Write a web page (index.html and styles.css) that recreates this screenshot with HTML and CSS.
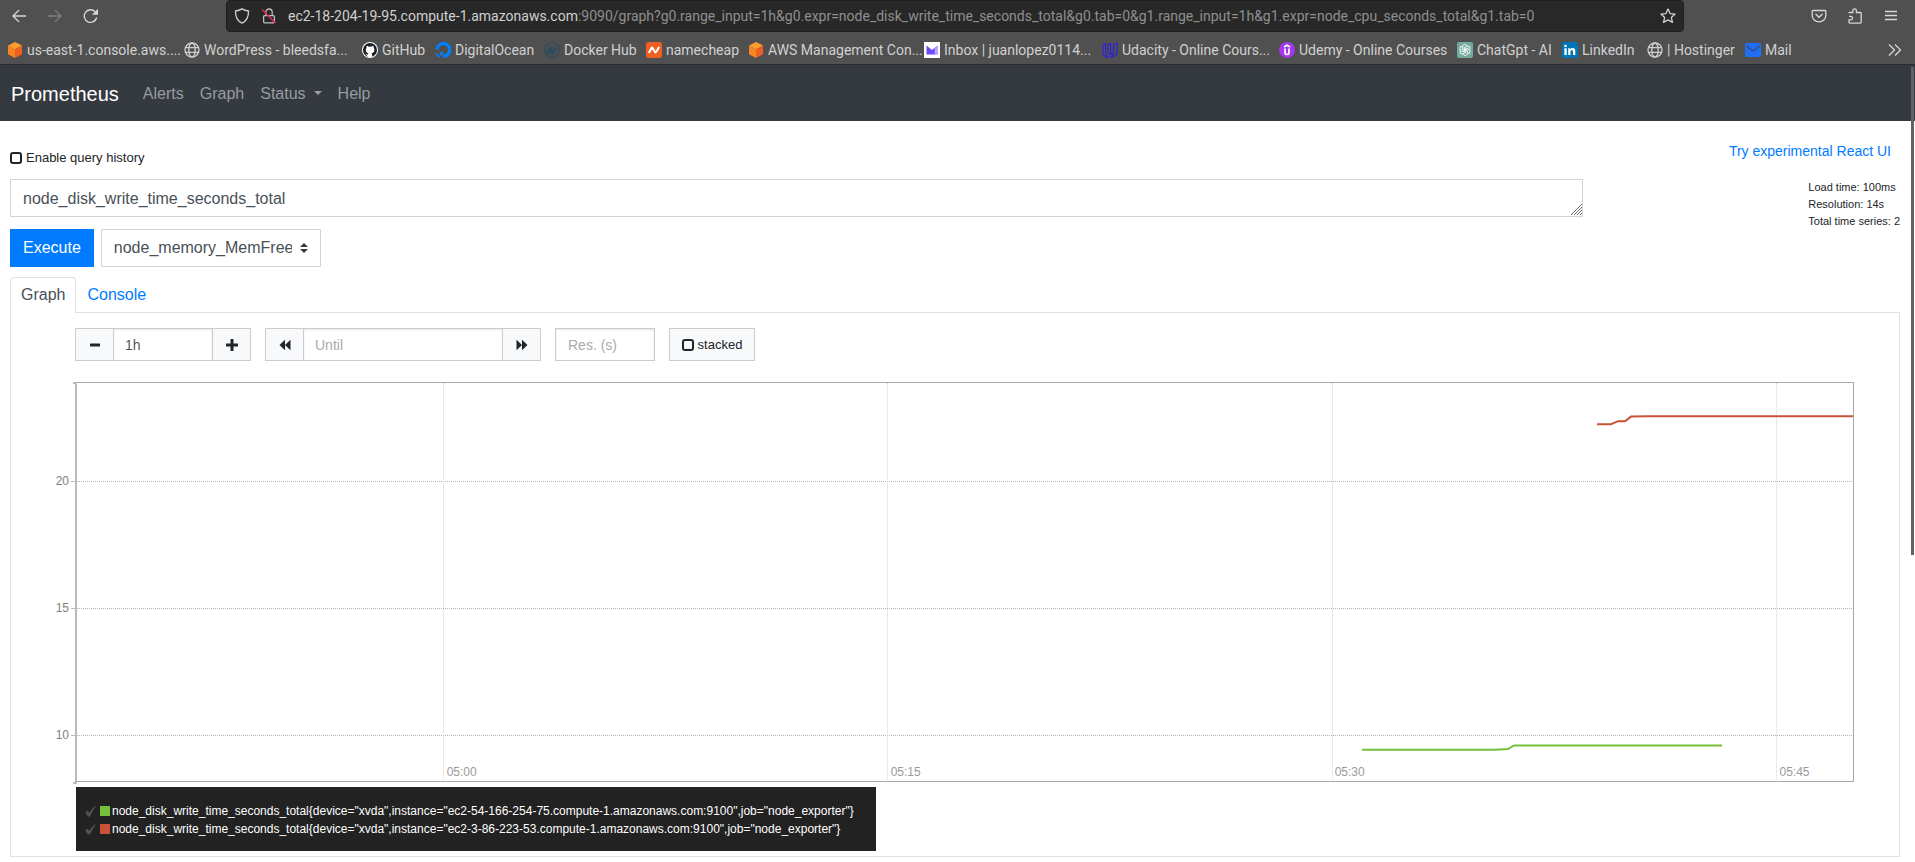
FILE: index.html
```html
<!DOCTYPE html>
<html lang="en">
<head>
<meta charset="utf-8">
<title>Prometheus Time Series Collection and Processing Server</title>
<link rel="stylesheet" href="styles.css">
</head>
<body>
<svg class="defs" aria-hidden="true">
  <symbol id="globe" viewBox="0 0 16 16"><g fill="none" stroke="#cfcfcf" stroke-width="1.3"><circle cx="8" cy="8" r="7"/><ellipse cx="8" cy="8" rx="3.2" ry="7"/><path d="M1.5 5.7h13M1.5 10.3h13"/></g></symbol>
  <symbol id="cube" viewBox="0 0 16 16"><path d="M8 0l7 3.6-7 3.8-7-3.8z" fill="#fb9d2c"/><path d="M1 3.6l7 3.8V16l-7-3.8z" fill="#f68522"/><path d="M15 3.6L8 7.4V16l7-3.8z" fill="#ef5f22"/></symbol>
  <symbol id="box" viewBox="0 0 12 12"><rect x="1" y="1" width="10" height="10" rx="2" fill="none" stroke="#212529" stroke-width="2"/></symbol>
  <symbol id="check" viewBox="0 0 12 12"><path d="M.3 7.200L2.700 5.600l1.500 2.200Q7 2.800 11.700.3 8 5 4.900 11.600H2.700z" fill="#505050"/></symbol>
</svg>

<header class="browser">
  <div class="toolbar">
    <div class="history">
      <button type="button" aria-label="Back"><svg width="16" height="16" viewBox="0 0 16 16"><path d="M15 8H2M8 2L2 8l6 6" fill="none" stroke="#d6d6d6" stroke-width="1.3"/></svg></button>
      <button type="button" aria-label="Forward"><svg width="16" height="16" viewBox="0 0 16 16"><path d="M1 8h13M8 2l6 6-6 6" fill="none" stroke="#7c7c7c" stroke-width="1.3"/></svg></button>
      <button type="button" aria-label="Reload"><svg width="16" height="16" viewBox="0 0 16 16"><path d="M13.7 9.5A6.3 6.3 0 1 1 12.2 3.800" fill="none" stroke="#d6d6d6" stroke-width="1.4"/><path d="M15 .8v6H9z" fill="#d6d6d6"/></svg></button>
    </div>
    <div class="urlbar">
      <svg width="16" height="16" viewBox="0 0 16 16"><path d="M8 .9c2 1.300 4 1.900 6.500 2.100.2 5.600-1.600 9.800-6.500 12.100C3.100 12.800 1.300 8.600 1.500 3 4 2.800 6 2.200 8 .9z" fill="none" stroke="#d0d0d0" stroke-width="1.3"/></svg>
      <svg width="16" height="16" viewBox="0 0 16 16"><rect x="2.600" y="7.600" width="10.800" height="7.200" rx="1" fill="none" stroke="#bdbdbd" stroke-width="1.3"/><path d="M4.800 7.500V4.200a3.200 3.200 0 0 1 6.400 0v3.300" fill="none" stroke="#bdbdbd" stroke-width="1.3"/><path d="M1 1.500l13.500 13.500" stroke="#e22850" stroke-width="1.500"/></svg>
      <div class="url" role="textbox" aria-label="Address"><b>ec2-18-204-19-95.compute-1.amazonaws.com</b>:9090/graph?g0.range_input=1h&amp;g0.expr=node_disk_write_time_seconds_total&amp;g0.tab=0&amp;g1.range_input=1h&amp;g1.expr=node_cpu_seconds_total&amp;g1.tab=0</div>
      <button type="button" aria-label="Bookmark"><svg width="16" height="16" viewBox="0 0 16 16"><path d="M8 1l2.100 4.600 5 .5-3.800 3.300 1.200 5L8 11.900l-4.500 2.500 1.200-5L.9 6.100l5-.5z" fill="none" stroke="#d0d0d0" stroke-width="1.3" stroke-linejoin="round"/></svg></button>
    </div>
    <div class="tools">
      <button type="button" aria-label="Pocket"><svg width="16" height="16" viewBox="0 0 16 16"><path d="M2 2.500h12a.8.8 0 0 1 .8.8v4.200a6.800 6.300 0 0 1-13.600 0V3.300a.8.8 0 0 1 .8-.8z" fill="none" stroke="#d6d6d6" stroke-width="1.3"/><path d="M4.500 6L8 9.300 11.500 6" fill="none" stroke="#d6d6d6" stroke-width="1.400"/></svg></button>
      <button type="button" aria-label="Extensions"><svg width="16" height="16" viewBox="0 0 16 16"><path d="M2 5.300q0-.8.8-.8h3V2.700a1.800 1.800 0 0 1 3.600 0v1.800h4q.8 0 .8.800v9q0 .8-.8.8H2.800q-.8 0-.8-.8v-2.500h1.800a1.700 1.700 0 0 0 0-3.400H2" fill="none" stroke="#d6d6d6" stroke-width="1.3"/></svg></button>
      <button type="button" aria-label="Menu"><svg width="16" height="16" viewBox="0 0 16 16"><path d="M2 3.500h12M2 7.500h12M2 11.500h12" stroke="#d6d6d6" stroke-width="1.3"/></svg></button>
    </div>
  </div>
  <nav class="bookmarks" aria-label="Bookmarks">
    <a href="#"><svg><use href="#cube"/></svg><span>us-east-1.console.aws....</span></a>
    <a href="#"><svg><use href="#globe"/></svg><span>WordPress - bleedsfa...</span></a>
    <a href="#"><svg viewBox="0 0 16 16"><circle cx="8" cy="8" r="8" fill="#fff"/><circle cx="8" cy="8" r="7" fill="#1b1f23"/><path d="M5.900 14.700v-2.300C4.300 12.600 4 11.500 3.300 11.200M3.800 8c0-1 .3-1.700.8-2.200-.2-.7-.1-1.400.1-2 .8 0 1.500.5 2 .9a7 7 0 0 1 2.800 0c.5-.4 1.200-.9 2-.9.2.6.3 1.300.1 2 .5.5.8 1.200.8 2.200 0 2.200-1.400 3-2.900 3.200.4.400.6.900.6 1.600v2.200H5.900v-2.600c0-.5.2-.9.5-1.200C5 11 3.800 10.200 3.800 8z" fill="#fff"/></svg><span>GitHub</span></a>
    <a href="#"><svg viewBox="0 0 16 16"><path d="M2 7.500A6.400 6.400 0 1 1 8.300 14.300" fill="none" stroke="#0080ff" stroke-width="3.200"/><path d="M5 10h3.300v3.300H5zM2.600 13.200h2.200v2.300H2.600zM.8 11.200h1.800v2H.8z" fill="#0080ff"/></svg><span>DigitalOcean</span></a>
    <a href="#"><svg viewBox="0 0 16 16"><circle cx="8" cy="8" r="7.300" fill="none" stroke="#2d4b60" stroke-width="1.100"/><path d="M2.500 7.800h8.200c.3-1 0-1.700.4-2.300.7.300 1 .8 1 1.400.7-.1 1.300 0 1.600.3-.3.800-1.100 1-1.900 1-.9 2.800-2.700 4.100-5.300 4.100-2.800 0-4.200-1.600-4-4.500zM4 5.800h5v1.600H4zM6.600 4.200H9v1.400H6.600z" fill="#2d4b60"/></svg><span>Docker Hub</span></a>
    <a href="#"><svg viewBox="0 0 16 16"><rect width="16" height="16" rx="2.500" fill="#ee5f24"/><path d="M3.200 10.300l2.300-4.200q.7-1 1.300.1L9 9.900q.6 1 1.300-.1l2.500-4.200" fill="none" stroke="#fff" stroke-width="2" stroke-linecap="round"/></svg><span>namecheap</span></a>
    <a href="#"><svg><use href="#cube"/></svg><span>AWS Management Con...</span></a>
    <a href="#"><svg viewBox="0 0 16 16"><path d="M0 0h16v16H0z" fill="#fff"/><path d="M2.500 3.500L8 8l5.500-4.500v9h-11z" fill="#6d4aff"/><path d="M10.700 5.800l2.800-2.300v9h-2.800z" fill="#b8a6ff"/></svg><span>Inbox | juanlopez0114...</span></a>
    <a href="#"><svg viewBox="0 0 16 16"><path d="M1 3.200L3.600 1.800V10.500Q3.600 14 7 15.200 1 15.500 1 10.500zM8.600 1.500V9Q8.600 11.500 10.500 12.500 6 12.500 6 9V2.800zM11.500 2.500L15.200 1V9.500Q15.200 14.500 8.500 15.200 11.500 14 11.500 10z" fill="none" stroke="#2a1ee8" stroke-width="1.100"/></svg><span>Udacity - Online Cours...</span></a>
    <a href="#"><svg viewBox="0 0 16 16"><circle cx="8" cy="8" r="8" fill="#a435f0"/><path d="M5 5l3-1.800L11 5M6 6.500v4q0 2 2 2t2-2v-4" fill="none" stroke="#fff" stroke-width="1.700"/></svg><span>Udemy - Online Courses</span></a>
    <a href="#"><svg viewBox="0 0 16 16"><rect width="16" height="16" rx="2" fill="#74aa9c"/><g fill="none" stroke="#fff" stroke-width=".9"><path id="petal" d="M8 8.900L5.600 7.500V4.800a2.300 2.300 0 0 1 4.200-1.300"/><use href="#petal" transform="rotate(60 8 8)"/><use href="#petal" transform="rotate(120 8 8)"/><use href="#petal" transform="rotate(180 8 8)"/><use href="#petal" transform="rotate(240 8 8)"/><use href="#petal" transform="rotate(300 8 8)"/></g></svg><span>ChatGpt - AI</span></a>
    <a href="#"><svg viewBox="0 0 16 16"><rect width="16" height="16" rx="1.500" fill="#0077b5"/><path d="M2.400 6.200h2.300V13H2.400zM6.200 6.200h2.200v1q.7-1.200 2.200-1.200 2.700 0 2.700 3.100V13H11V9.600q0-1.600-1.200-1.600T8.500 9.600V13H6.200z" fill="#fff"/><circle cx="3.500" cy="4" r="1.300" fill="#fff"/></svg><span>LinkedIn</span></a>
    <a href="#"><svg><use href="#globe"/></svg><span>| Hostinger</span></a>
    <a href="#"><svg viewBox="0 0 16 16"><rect y="1" width="16" height="14" rx="1.500" fill="#1f6ff5"/><path d="M1.500 4l5 4.200q1.500 1.100 3 0l5-4.200" fill="none" stroke="#3c4c66" stroke-width="1.300"/></svg><span>Mail</span></a>
    <button type="button" aria-label="More bookmarks"><svg viewBox="0 0 16 16"><path d="M2 2.500l5.500 5.500L2 13.500M8 2.500l5.500 5.500L8 13.500" fill="none" stroke="#d6d6d6" stroke-width="1.300"/></svg></button>
  </nav>
</header>

<div class="scroll-thumb"></div>

<nav class="navbar">
  <a class="brand" href="#">Prometheus</a>
  <a href="#">Alerts</a>
  <a href="#">Graph</a>
  <a href="#" class="dropdown">Status</a>
  <a href="#">Help</a>
</nav>

<main class="page">
  <div class="top-row">
    <button type="button" class="toggle"><svg><use href="#box"/></svg>Enable query history</button>
    <a href="#">Try experimental React UI</a>
  </div>

  <div class="query-row">
    <div class="expression">
      <textarea rows="1" aria-label="Expression" spellcheck="false">node_disk_write_time_seconds_total</textarea>
      <svg class="grip" viewBox="0 0 11 11"><path d="M0 11L11 0M3 11l8-8M6 11l5-5M9 11l2-2" stroke="#6b6b6b" stroke-width="1"/></svg>
    </div>
    <div class="stats">
      <div>Load time: 100ms</div>
      <div>Resolution: 14s</div>
      <div>Total time series: 2</div>
    </div>
  </div>

  <div class="execute-row">
    <button type="button" class="execute">Execute</button>
    <div class="metric">
      <select aria-label="Metric"><option>node_memory_MemFree_bytes</option></select>
      <svg viewBox="0 0 8 10"><path d="M4 0l4 4H0zM4 10L0 6h8z" fill="#343a40"/></svg>
    </div>
  </div>

  <div class="tabs">
    <a href="#" class="active">Graph</a>
    <a href="#">Console</a>
  </div>

  <section class="panel">
    <div class="controls">
      <div class="group">
        <button type="button" aria-label="Shrink range"><svg viewBox="0 0 12 12"><rect x="1" y="4.500" width="10" height="3" rx=".6"/></svg></button>
        <input class="short" type="text" value="1h" aria-label="Range">
        <button type="button" aria-label="Grow range"><svg viewBox="0 0 12 12"><path d="M4.500 0h3v4.500H12v3H7.500V12h-3V7.500H0v-3h4.500z"/></svg></button>
      </div>
      <div class="group">
        <button type="button" aria-label="Rewind"><svg viewBox="0 0 12 12"><path d="M6 .7v10.600L.5 6zM11.500 .7v10.600L6 6z"/></svg></button>
        <input class="long" type="text" placeholder="Until" aria-label="Until">
        <button type="button" aria-label="Fast forward"><svg viewBox="0 0 12 12"><path d="M.5 .7v10.600L6 6zM6 .7v10.600L11.500 6z"/></svg></button>
      </div>
      <div class="group"><input class="short" type="text" placeholder="Res. (s)" aria-label="Resolution"></div>
      <div class="group"><button type="button" class="toggle stacked"><svg><use href="#box"/></svg>stacked</button></div>
    </div>

    <div class="chart">
      <svg class="plot" viewBox="0 0 1776 398" preserveAspectRatio="none">
        <g class="grid">
          <path class="h" d="M0 98.500H1776M0 225.500H1776M0 352.500H1776"/>
          <path d="M366.500 0V398M810.500 0V398M1255.500 0V398M1699.500 0V398"/>
        </g>
        <path class="line" stroke="#73c03a" d="M1285 366.700H1418L1431 366L1437 362.500H1645"/>
        <path class="line" stroke="#cb513a" d="M1520 41.200H1534L1541 38.200H1548L1554 33.600L1571 33.300H1776"/>
      </svg>
      <span class="y-label" style="top:24.7%">20</span>
      <span class="y-label" style="top:56.6%">15</span>
      <span class="y-label" style="top:88.5%">10</span>
      <span class="y-end top"></span>
      <span class="y-end bottom"></span>
      <span class="x-label" style="left:20.7%">05:00</span>
      <span class="x-label" style="left:45.7%">05:15</span>
      <span class="x-label" style="left:70.7%">05:30</span>
      <span class="x-label" style="left:95.75%">05:45</span>
    </div>

    <ul class="legend">
      <li><svg class="tick"><use href="#check"/></svg><i class="green"></i>node_disk_write_time_seconds_total{device="xvda",instance="ec2-54-166-254-75.compute-1.amazonaws.com:9100",job="node_exporter"}</li>
      <li><svg class="tick"><use href="#check"/></svg><i class="red"></i>node_disk_write_time_seconds_total{device="xvda",instance="ec2-3-86-223-53.compute-1.amazonaws.com:9100",job="node_exporter"}</li>
    </ul>
  </section>
</main>
</body>
</html>
```
FILE: styles.css
```css
* { box-sizing: border-box; }

body {
  margin: 0;
  font: 16px/24px "Liberation Sans", Arial, sans-serif;
  color: #212529;
  background: #fff;
}

a { color: #007bff; text-decoration: none; }
button, input, select, textarea { font: inherit; color: inherit; margin: 0; border-radius: 0; }
button { padding: 0; border: 0; background: none; }
svg { display: block; flex: none; }
.defs { position: absolute; width: 0; height: 0; }

/* Browser chrome */
.browser {
  background: #505050;
  border-bottom: 1px solid #2b2b2b;
  font-family: Roboto, "Noto Sans", sans-serif;
  color: #d0d0d0;
}
.toolbar {
  display: grid;
  grid-template-columns: 226px minmax(0, 1458px) 1fr;
  height: 32px;
}
.history { display: flex; align-items: center; gap: 20px; padding-left: 11px; }
.tools { display: flex; align-items: center; justify-content: flex-end; gap: 20px; padding-right: 16px; }
.urlbar {
  display: flex;
  align-items: center;
  gap: 11px;
  padding: 0 7px;
  background: #282828;
  border: 1px solid #1e1e1e;
  border-radius: 4px;
}
.url {
  flex: 1;
  overflow: hidden;
  white-space: nowrap;
  font-size: 14px;
  color: #8f8f8f;
}
.url b { font-weight: 400; color: #d0d0d0; }
.bookmarks {
  display: grid;
  grid-template-columns: 177px 178px 73px 109px 102px 102px 176px 178px 177px 178px 105px 85px 98px 1fr 19px;
  align-items: center;
  height: 32px;
  padding: 4px 9px 0 7px;
}
.bookmarks a {
  display: flex;
  align-items: center;
  gap: 4px;
  color: inherit;
  font-size: 14px;
  line-height: 20px;
  white-space: nowrap;
}
.bookmarks svg { width: 16px; height: 16px; }

.scroll-thumb {
  position: absolute;
  top: 67px;
  right: 1px;
  width: 3px;
  height: 488px;
  background: #606264;
}

/* Navigation bar */
.navbar {
  display: flex;
  align-items: center;
  height: 56px;
  padding: 1px 11px 0;
  background: #343a40;
}
.navbar a { padding: 0 8px; color: #999c9f; }
.navbar .brand { padding: 0; margin-right: 16px; font-size: 20px; color: #fff; }
.dropdown::after {
  content: "";
  display: inline-block;
  margin-left: 8px;
  vertical-align: 4px;
  border: 4px solid transparent;
  border-top-color: currentColor;
  border-bottom: 0;
}

.page { padding: 20px 15px 5px 10px; }

.toggle { display: flex; align-items: center; gap: 4px; font-size: 13px; }
.toggle svg { width: 12px; height: 12px; }
.top-row {
  display: flex;
  justify-content: space-between;
  align-items: flex-end;
  height: 29px;
  padding-right: 9px;
}
.top-row a { align-self: flex-start; font-size: 14px; line-height: 20px; }

.query-row { display: flex; justify-content: space-between; margin-top: 9px; height: 50px; }
.expression { position: relative; width: 83.25%; }
.expression textarea {
  display: block;
  width: 100%;
  height: 38px;
  padding: 7px 12px 5px;
  border: 1px solid #ced4da;
  color: #495057;
  resize: none;
  overflow: hidden;
}
.grip { position: absolute; right: 1px; bottom: 14px; width: 11px; height: 11px; }
.stats { font-size: 11px; line-height: 17px; white-space: nowrap; }

.execute-row { display: flex; gap: 7px; }
.execute { height: 38px; padding: 0 12px; background: #007bff; color: #fff; border: 1px solid #007bff; }
.metric { position: relative; width: 220px; }
.metric select {
  appearance: none;
  width: 100%;
  height: 38px;
  padding: 0 28px 0 12px;
  border: 1px solid #ced4da;
  background: #fff;
  color: #495057;
}
.metric svg { position: absolute; right: 13px; top: 14px; width: 8px; height: 10px; pointer-events: none; }

.tabs { display: flex; margin-top: 10px; }
.tabs a { height: 36px; padding: 5px 10px; border: 1px solid transparent; border-bottom: 0; }
.tabs .active {
  border-color: #dee2e6;
  border-radius: 4px 4px 0 0;
  background: #fff;
  color: #495057;
  z-index: 1;
  margin-bottom: -1px;
}
.panel { margin-top: -1px; padding: 15px 45px 5px 64px; border: 1px solid #dee2e6; }

/* Graph controls */
.controls { display: flex; gap: 14px; height: 33px; color: #212529; }
.group { display: flex; border: 1px solid #ccc; font-size: 14px; }
.group button { width: 37px; background: #f8f9fa; display: flex; align-items: center; justify-content: center; }
.group button svg { width: 12px; height: 12px; fill: #212529; }
.group input {
  padding: 0 12px;
  border: 0;
  background: #fff;
  box-shadow: inset 0 1px 2px #e4e4e4;
  color: #555;
  outline: 0;
}
.group input::placeholder { color: #aaa; }
.group button + input { padding: 0 11px; border-left: 1px solid #ccc; border-right: 1px solid #ccc; }
.short { width: 98px; }
.group button + .short { width: 100px; }
.long { width: 200px; }
.group .stacked { width: 84px; font-size: 13px; }

/* Graph */
.chart {
  position: relative;
  height: 400px;
  margin-top: 21px;
  border: 1px solid #a8a8a8;
  border-left: 2px solid #bbb;
}
.plot { width: 100%; height: 100%; }
.grid path { fill: none; stroke: #d4d4d4; stroke-dasharray: 1 1; vector-effect: non-scaling-stroke; }
.grid .h { stroke: #b4b4b4; }
.line { fill: none; stroke-width: 2; vector-effect: non-scaling-stroke; }
.y-label {
  position: absolute;
  right: 100%;
  margin-top: -8px;
  padding-right: 8px;
  font-size: 12px;
  line-height: 16px;
  color: #808080;
}
.y-label::after, .y-end {
  content: "";
  position: absolute;
  right: 2px;
  top: 8px;
  width: 4px;
  height: 1px;
  background: #bbb;
}
.y-end { right: 100%; height: 2px; }
.y-end.top { top: -1px; }
.y-end.bottom { top: 399px; }
.x-label { position: absolute; bottom: 0; margin-left: 2px; font-size: 12px; line-height: 18px; color: #999; }

.legend {
  width: 800px;
  max-width: 100%;
  margin: 5px 0 0 1px;
  padding: 15px 9px 13px;
  list-style: none;
  background: #222;
  color: #fff;
  font-size: 12px;
  line-height: 18px;
}
.legend li { display: flex; align-items: center; white-space: nowrap; }
.tick { width: 12px; height: 12px; margin-right: 3px; }
.legend i { width: 10px; height: 10px; margin-right: 2px; }
.green { background: #73c03a; }
.red { background: #cb513a; }
```
